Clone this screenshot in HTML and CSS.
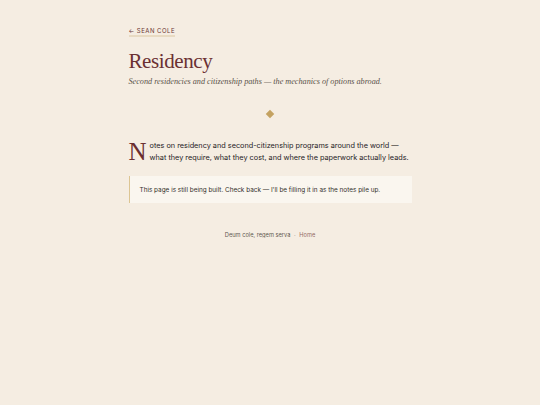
FILE: index.html
```html
<!DOCTYPE html>
<html lang="en">
<head>
<meta charset="utf-8">
<title>Residency</title>
<link rel="stylesheet" href="styles.css">
</head>
<body>
<main class="page">
  <nav class="back"><a href="#" class="back-link">← Sean Cole</a></nav>
  <header class="head">
    <h1 class="title">Residency</h1>
    <p class="subtitle">Second residencies and citizenship paths — the mechanics of options abroad.</p>
  </header>
  <div class="divider"><span class="diamond"></span></div>
  <p class="lede"><span class="dropcap">N</span>otes on residency and second-citizenship programs around the world — what they require, what they cost, and where the paperwork actually leads.</p>
  <aside class="note">This page is still being built. Check back — I'll be filling it in as the notes pile up.</aside>
  <footer class="foot">Deum cole, regem serva <span class="dot">·</span> <a href="#" class="home">Home</a></footer>
</main>
</body>
</html>
```

FILE: styles.css
```css
html, body {
  margin: 0;
  padding: 0;
  background: #f5ede2;
}
body {
  font-family: Inter, "Noto Sans", sans-serif;
  color: #2e2a26;
}
.page {
  width: 283px;
  margin: 0 auto;
  padding-top: 26px;
}
.back {
  font-size: 6px;
  letter-spacing: 0.08em;
  text-transform: uppercase;
  line-height: 9px;
}
.back-link {
  color: #6b3535;
  text-decoration: none;
  border-bottom: 2px solid #e8dac2;
  padding-bottom: 0.5px;
}
.head {
  margin-top: 12px;
}
.title {
  font-family: "Liberation Serif", "DejaVu Serif", serif;
  font-weight: normal;
  font-size: 21px;
  letter-spacing: -0.4px;
  line-height: 28px;
  color: #6b3032;
  margin: 0;
}
.subtitle {
  font-family: "Liberation Serif", "DejaVu Serif", serif;
  font-style: italic;
  font-size: 8.2px;
  line-height: 12px;
  color: #5a524a;
  margin: 1px 0 0;
}
.divider {
  display: flex;
  justify-content: center;
  margin-top: 21px;
  height: 10px;
  align-items: center;
}
.diamond {
  width: 6px;
  height: 6px;
  background: #c4a261;
  transform: rotate(45deg);
}
.lede {
  margin: 21px 0 0;
  font-size: 7.3px;
  line-height: 11.5px;
  color: #26221f;
}
.dropcap {
  float: left;
  font-family: "Liberation Serif", "DejaVu Serif", serif;
  font-size: 25px;
  line-height: 19px;
  color: #6b2f30;
  margin: 2px 3px 0 0;
}
.note {
  margin-top: 13px;
  background: #faf6ef;
  border-left: 1.5px solid #dcc593;
  padding: 8.5px 10px;
  font-size: 6.4px;
  line-height: 10px;
  color: #34302b;
}
.foot {
  margin-top: 28px;
  text-align: center;
  font-size: 5.7px;
  color: #5f5850;
}
.dot {
  margin: 0 2px;
  color: #a89f94;
}
.home {
  color: #946a62;
  text-decoration: underline;
  text-decoration-thickness: 0.6px;
  text-underline-offset: 1px;
}
```
